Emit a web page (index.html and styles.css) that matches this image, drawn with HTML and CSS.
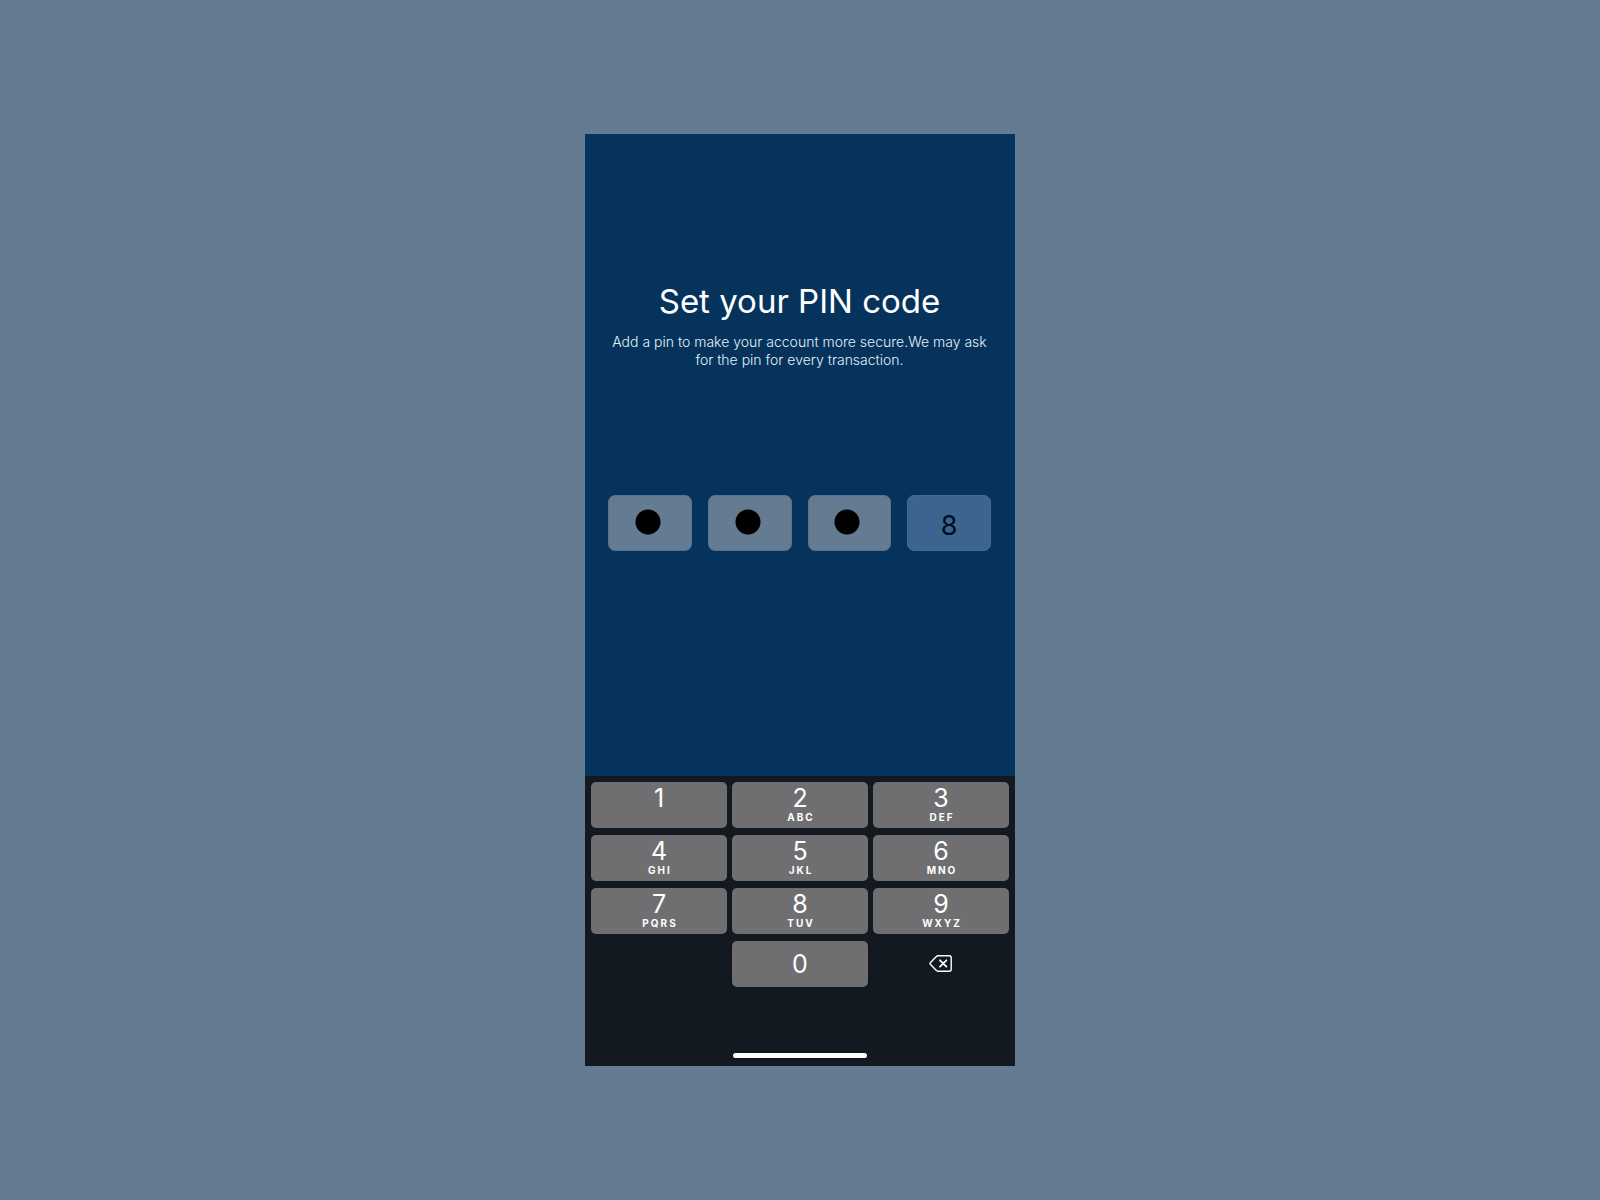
FILE: index.html
```html
<!DOCTYPE html>
<html lang="en">
<head>
<meta charset="utf-8">
<meta name="viewport" content="width=device-width, initial-scale=1">
<title>Set your PIN code</title>
<link rel="stylesheet" href="styles.css">
</head>
<body>
<main class="phone">
  <form class="screen">
    <h1 class="title">Set your PIN code</h1>
    <p class="subtitle">Add a pin to make your account more secure.We may ask for the pin for every transaction.</p>
    <div class="pin">
      <input class="pin-box pin-hidden" type="password" value="1" maxlength="1" aria-label="PIN digit 1">
      <input class="pin-box pin-hidden" type="password" value="2" maxlength="1" aria-label="PIN digit 2">
      <input class="pin-box pin-hidden" type="password" value="3" maxlength="1" aria-label="PIN digit 3">
      <input class="pin-box pin-current" type="text" inputmode="numeric" value="8" maxlength="1" aria-label="PIN digit 4">
    </div>
  </form>
  <section class="keyboard" aria-label="Keypad">
    <div class="keys">
      <button class="key" type="button"><span class="digit">1</span><span class="letters"></span></button>
      <button class="key" type="button"><span class="digit">2</span><span class="letters">ABC</span></button>
      <button class="key" type="button"><span class="digit">3</span><span class="letters">DEF</span></button>
      <button class="key" type="button"><span class="digit">4</span><span class="letters">GHI</span></button>
      <button class="key" type="button"><span class="digit">5</span><span class="letters">JKL</span></button>
      <button class="key" type="button"><span class="digit">6</span><span class="letters">MNO</span></button>
      <button class="key" type="button"><span class="digit">7</span><span class="letters">PQRS</span></button>
      <button class="key" type="button"><span class="digit">8</span><span class="letters">TUV</span></button>
      <button class="key" type="button"><span class="digit">9</span><span class="letters">WXYZ</span></button>
      <button class="key key-zero" type="button"><span class="digit">0</span></button>
      <button class="key key-delete" type="button" aria-label="Delete">
        <svg width="24" height="18" viewBox="0 0 24 18" fill="none" stroke="#fff" stroke-linejoin="round" stroke-linecap="round">
          <path stroke-width="1.4" d="M8.800 .8H20.200Q22.200 .8 22.200 2.800V14.200Q22.200 16.200 20.200 16.200H8.800Q8 16.200 7.400 15.600L1.300 9.200Q.7 8.500 1.300 7.800L7.400 1.400Q8 .8 8.800 .8Z"/>
          <path stroke-width="1.800" d="M11 5.300L17.400 11.700M17.400 5.300L11 11.700"/>
        </svg>
      </button>
    </div>
    <div class="home-bar"></div>
  </section>
</main>
</body>
</html>
```
FILE: styles.css
```css
* {
  box-sizing: border-box;
}

body {
  margin: 0;
  min-height: 100vh;
  display: flex;
  align-items: center;
  justify-content: center;
  background: #647b91;
  color: #fff;
  font-family: Inter, "Liberation Sans", sans-serif;
}

.phone {
  width: 100%;
  max-width: 430px;
  min-height: 932px;
  display: flex;
  flex-direction: column;
  background: #05335b;
}

.screen {
  flex: 1;
  padding: 147px 24px 0 23px;
}

.title {
  margin: 0;
  font-size: 33px;
  line-height: 40px;
  font-weight: 400;
  text-align: center;
}

.subtitle {
  margin: 12px 0 0;
  font-size: 14px;
  line-height: 18px;
  font-weight: 300;
  text-align: center;
  color: #e3f1fb;
}

.pin {
  margin-top: 126px;
  display: grid;
  grid-template-columns: repeat(4, 1fr);
  gap: 16px;
}

.pin-box {
  width: 100%;
  height: 56px;
  padding: 4px 0 0;
  border: 1px solid #56718c;
  border-radius: 7px;
  font: 400 27px/32px Inter, "Liberation Sans", sans-serif;
  text-align: center;
  color: #020b1c;
}

.pin-hidden {
  color: transparent;
  background: #647b91 radial-gradient(circle, #000 12px, transparent 13px) 46% 45% / 30px 30px no-repeat;
}

.pin-current {
  background: #3b648f;
  border-color: #4069a0;
}

.keyboard {
  padding: 6px 6px 8px;
  background: #121920;
}

.keys {
  display: grid;
  grid-template-columns: repeat(3, 1fr);
  gap: 7px 5px;
}

.key {
  height: 46px;
  padding: 2px 0 0;
  display: flex;
  flex-direction: column;
  align-items: center;
  border: 0;
  border-radius: 5px;
  background: #6f6f71;
  color: #fff;
  font-family: inherit;
}

.digit {
  font-size: 25px;
  line-height: 28px;
  font-weight: 400;
}

.letters {
  padding-left: 2px;
  font-size: 10px;
  line-height: 10px;
  font-weight: 700;
  letter-spacing: 2px;
}

.key-zero {
  grid-column: 2;
  padding: 0;
  justify-content: center;
}

.key-delete {
  padding: 0;
  justify-content: center;
  background: transparent;
}

.home-bar {
  width: 134px;
  height: 5px;
  margin: 66px auto 0;
  border-radius: 3px;
  background: #fff;
}
```
